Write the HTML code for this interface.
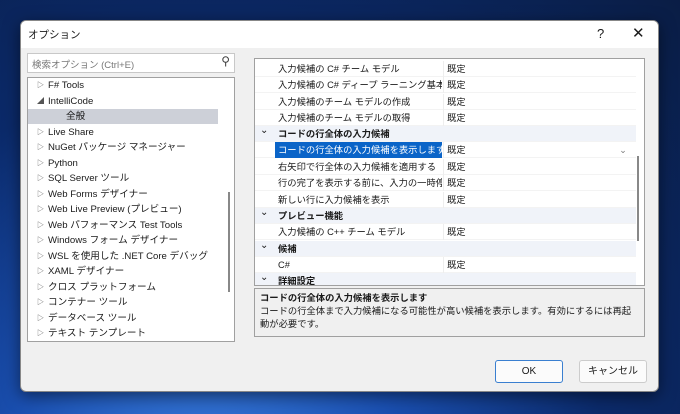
<!DOCTYPE html>
<html><head><meta charset="utf-8"><style>
*{margin:0;padding:0;box-sizing:border-box}
body{width:680px;height:414px;overflow:hidden;background:radial-gradient(ellipse at 30% 120%,#3b7fe0 0%,#1a4fb0 30%,#0b2a6a 60%,#0a1d45 100%);font-family:"Liberation Sans","Noto Sans CJK JP",sans-serif;font-size:11px;color:#1a1a1a;position:relative}
.dlg{position:absolute;left:20px;top:20px;width:639px;height:372px;background:#f0f0f0;border:1px solid #888;border-radius:6px;overflow:hidden;box-shadow:0 4px 16px rgba(0,0,0,.5)}
.title{height:27px;background:#fff;position:relative}
.title span{position:absolute;left:7px;top:6px;font-size:10.5px}
.abs{position:absolute}
.search{left:6px;top:32px;width:208px;height:20px;background:#fff;border:1px solid #c8c8c8;color:#777;padding:3px 4px;font-size:9.5px}
.tree{left:6px;top:56px;width:208px;height:265px;background:#fff;border:1px solid #a0a0a0;overflow:hidden}
.tr{position:absolute;left:0;width:190px;height:15px;line-height:15px;font-size:9.6px}
.tr i{position:absolute;left:9px;font-style:normal;font-size:7px;color:#555}
.tr b{font-weight:normal;position:absolute;left:20px;white-space:nowrap}
.vs{position:absolute;width:2px;background:#888}
.grid{left:233px;top:37px;width:391px;height:228px;background:#fff;border:1px solid #a0a0a0;overflow:hidden}
.gr{position:absolute;left:0;width:381px;height:16px;line-height:16px;font-size:9.3px;border-bottom:1px solid #f3f3f3}
.gr .n{position:absolute;left:20px;width:167px;white-space:nowrap;overflow:hidden;padding-left:3px}
.gr .v{position:absolute;left:188px;padding-left:3px;border-left:1px solid #eee;height:16px}
.gr.h{background:#f0f3f9}
.gr.h .n{font-weight:bold;left:20px}
.gr.h i{position:absolute;left:5px;top:-3px;font-style:normal;font-size:10px}
.desc{left:233px;top:267px;width:391px;height:49px;border:1px solid #a0a0a0;background:#f0f0f0;padding:3px 5px;font-size:9.3px;line-height:13px}
.btn{top:339px;width:68px;height:23px;background:#fbfbfb;border:1px solid #ccc;border-radius:3px;text-align:center;line-height:21px;font-size:10px}
</style></head><body>
<div class="dlg">
<div class="title"><span>オプション</span><span style="left:576px;top:5px;font-size:13px">?</span><span style="left:611px;top:3px;font-size:15px">✕</span></div>
<div class="abs search">検索オプション (Ctrl+E)<span style="position:absolute;right:4px;top:0;color:#444;font-size:12px">⚲</span></div>
<div class="abs tree">
<div class="tr" style="top:0"><i>▷</i><b>F# Tools</b></div>
<div class="tr" style="top:16px"><i>◢</i><b>IntelliCode</b></div>
<div class="tr" style="top:31px;background:#cdd0d8"><b style="left:38px">全般</b></div>
<div class="tr" style="top:47px"><i>▷</i><b>Live Share</b></div>
<div class="tr" style="top:62px"><i>▷</i><b>NuGet パッケージ マネージャー</b></div>
<div class="tr" style="top:78px"><i>▷</i><b>Python</b></div>
<div class="tr" style="top:93px"><i>▷</i><b>SQL Server ツール</b></div>
<div class="tr" style="top:109px"><i>▷</i><b>Web Forms デザイナー</b></div>
<div class="tr" style="top:124px"><i>▷</i><b>Web Live Preview (プレビュー)</b></div>
<div class="tr" style="top:140px"><i>▷</i><b>Web パフォーマンス Test Tools</b></div>
<div class="tr" style="top:155px"><i>▷</i><b>Windows フォーム デザイナー</b></div>
<div class="tr" style="top:171px"><i>▷</i><b>WSL を使用した .NET Core デバッグ</b></div>
<div class="tr" style="top:186px"><i>▷</i><b>XAML デザイナー</b></div>
<div class="tr" style="top:202px"><i>▷</i><b>クロス プラットフォーム</b></div>
<div class="tr" style="top:217px"><i>▷</i><b>コンテナー ツール</b></div>
<div class="tr" style="top:233px"><i>▷</i><b>データベース ツール</b></div>
<div class="tr" style="top:248px"><i>▷</i><b>テキスト テンプレート</b></div>
<div class="vs" style="left:200px;top:114px;height:100px"></div>
</div>
<div class="abs grid">
<div class="gr" style="top:2px"><span class="n">入力候補の C# チーム モデル</span><span class="v">既定</span></div>
<div class="gr" style="top:18px"><span class="n">入力候補の C# ディープ ラーニング基本モデル</span><span class="v">既定</span></div>
<div class="gr" style="top:35px"><span class="n">入力候補のチーム モデルの作成</span><span class="v">既定</span></div>
<div class="gr" style="top:51px"><span class="n">入力候補のチーム モデルの取得</span><span class="v">既定</span></div>
<div class="gr h" style="top:67px"><i>⌄</i><span class="n">コードの行全体の入力候補</span></div>
<div class="gr" style="top:83px"><span class="n" style="background:#0a64c8;color:#fff">コードの行全体の入力候補を表示します</span><span class="v">既定</span><span style="position:absolute;left:360px;top:0;width:16px;height:16px;color:#777;text-align:center;font-size:9px">⌄</span></div>
<div class="gr" style="top:100px"><span class="n">右矢印で行全体の入力候補を適用する</span><span class="v">既定</span></div>
<div class="gr" style="top:116px"><span class="n">行の完了を表示する前に、入力の一時停止</span><span class="v">既定</span></div>
<div class="gr" style="top:133px"><span class="n">新しい行に入力候補を表示</span><span class="v">既定</span></div>
<div class="gr h" style="top:149px"><i>⌄</i><span class="n">プレビュー機能</span></div>
<div class="gr" style="top:165px"><span class="n">入力候補の C++ チーム モデル</span><span class="v">既定</span></div>
<div class="gr h" style="top:182px"><i>⌄</i><span class="n">候補</span></div>
<div class="gr" style="top:198px"><span class="n">C#</span><span class="v">既定</span></div>
<div class="gr h" style="top:214px"><i>⌄</i><span class="n">詳細設定</span></div>
<div class="vs" style="left:382px;top:97px;height:85px"></div>
</div>
<div class="abs desc"><b>コードの行全体の入力候補を表示します</b><br>コードの行全体まで入力候補になる可能性が高い候補を表示します。有効にするには再起動が必要です。</div>
<div class="abs btn" style="left:474px;border:1px solid #3a7fd0">OK</div>
<div class="abs btn" style="left:558px">キャンセル</div>
</div>
</body></html>
